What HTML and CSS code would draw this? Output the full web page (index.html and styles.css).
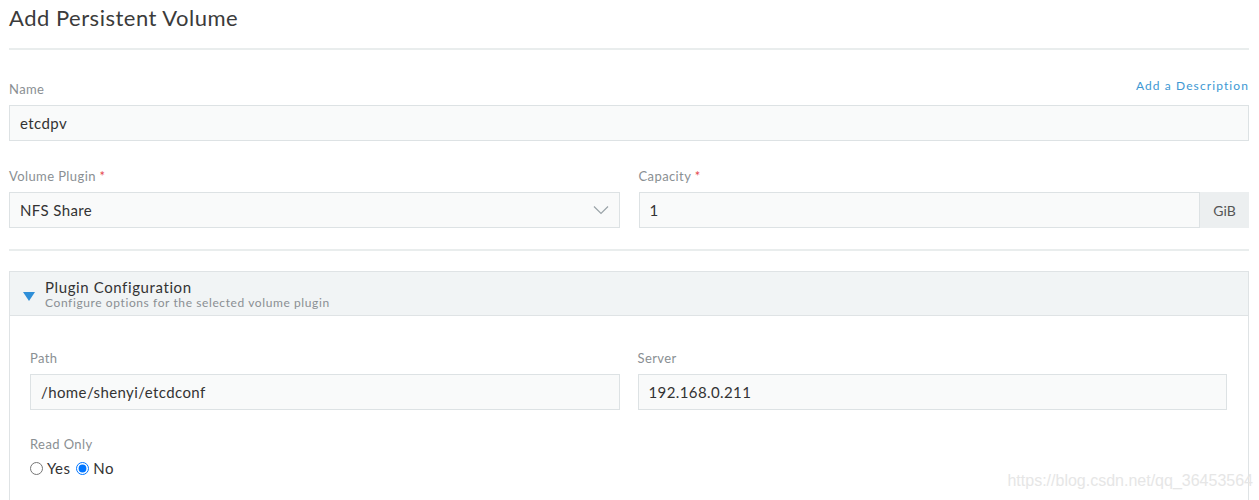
FILE: index.html
```html
<!DOCTYPE html>
<html lang="en">
<head>
  <meta charset="UTF-8" />
  <title>Add Persistent Volume</title>
  <link rel="stylesheet" href="styles.css">
</head>
<body>
  <div class="page">
    <h1>Add Persistent Volume</h1>
    <hr class="sep" />

    <div class="field">
      <div class="label-row">
        <label>Name</label>
        <a href="#" class="add-desc">Add a Description</a>
      </div>
      <div class="input">etcdpv</div>
    </div>

    <div class="row">
      <div class="field">
        <label>Volume Plugin <span class="req">*</span></label>
        <div class="input select">
          NFS Share
          <svg class="chevron" width="16" height="10" viewBox="0 0 16 10"><path d="M1 1.5 L8 8.5 L15 1.5" fill="none" stroke="#9aa3a8" stroke-width="1.2"/></svg>
        </div>
      </div>
      <div class="field">
        <label>Capacity <span class="req">*</span></label>
        <div class="input-group">
          <div class="input">1</div>
          <span class="addon">GiB</span>
        </div>
      </div>
    </div>

    <hr class="sep sep-2" />

    <div class="box">
      <div class="box-head">
        <span class="caret"></span>
        <div>
          <div class="box-title">Plugin Configuration</div>
          <div class="box-sub">Configure options for the selected volume plugin</div>
        </div>
      </div>
      <div class="box-body">
        <div class="row">
          <div class="field">
            <label>Path</label>
            <div class="input">/home/shenyi/etcdconf</div>
          </div>
          <div class="field">
            <label>Server</label>
            <div class="input">192.168.0.211</div>
          </div>
        </div>
        <div class="field radio-field">
          <label>Read Only</label>
          <div class="radios">
            <label class="radio"><input type="radio" name="ro" /> Yes</label>
            <label class="radio"><input type="radio" name="ro" checked /> No</label>
          </div>
        </div>
      </div>
    </div>
  </div>
  <div class="watermark">https://blog.csdn.net/qq_36453564</div>
</body>
</html>
```

FILE: styles.css
```css
body {
  margin: 0;
  background: white;
  font-family: Lato, "Open Sans", sans-serif;
  color: #3d3d3d;
  overflow: hidden;
  height: 500px;
}
.page {
  padding: 0 10px 0 9px;
}
h1 {
  margin: 0;
  font-size: 22px;
  font-weight: normal;
  line-height: 36px;
  color: #3b3b3b;
  letter-spacing: 0.5px;
}
.sep {
  border: none;
  height: 2px;
  background: #e9eded;
  margin: 12px 0 28px;
}
.sep-2 {
  margin: 21px 0 20px;
}
.field {
  flex: 1;
  margin-bottom: 27px;
}
.field label {
  display: block;
  font-size: 13px;
  color: #8a8f93;
  line-height: 16px;
  margin-bottom: 8px;
  letter-spacing: 0.4px;
}
.label-row {
  display: flex;
  justify-content: space-between;
  align-items: flex-end;
}
.add-desc {
  font-size: 12px;
  color: #3d98d3;
  text-decoration: none;
  letter-spacing: 1.1px;
  margin-bottom: 12px;
}
.req {
  color: #e5474b;
}
.input {
  height: 36px;
  box-sizing: border-box;
  background: #f9fafa;
  border: 1px solid #dde2e4;
  padding: 0 10px;
  display: flex;
  align-items: center;
  font-size: 15px;
  color: #333;
  letter-spacing: 0.4px;
}
.select {
  justify-content: space-between;
  padding-right: 10px;
}
.row {
  display: flex;
  gap: 19px;
}
.row .field {
  margin-bottom: 0;
}
.input-group {
  display: flex;
}
.input-group .input {
  flex: 1;
}
.addon {
  width: 49px;
  background: #eceff0;
  display: flex;
  align-items: center;
  justify-content: center;
  font-size: 14px;
  color: #555;
}
.box {
  border: 1px solid #dfe3e5;
  border-bottom: none;
}
.box-head {
  background: #f1f4f5;
  border-bottom: 1px solid #dfe3e5;
  height: 44px;
  box-sizing: border-box;
  display: flex;
  align-items: center;
  padding-left: 13px;
  gap: 10px;
}
.caret {
  width: 0;
  height: 0;
  border-left: 6px solid transparent;
  border-right: 6px solid transparent;
  border-top: 9px solid #2f8fd8;
  margin-top: 6px;
}
.box-title {
  font-size: 15px;
  color: #333;
  line-height: 18px;
  letter-spacing: 0.6px;
}
.box-sub {
  font-size: 12px;
  color: #8a8f93;
  line-height: 14px;
  letter-spacing: 0.6px;
}
.box-body {
  padding: 34px 21px 26px 20px;
}
.box-body .row {
  gap: 18px;
}
.radio-field {
  margin-top: 26px;
  margin-bottom: 0;
}
.radios {
  display: flex;
  gap: 6px;
}
.radios .radio {
  display: flex;
  align-items: center;
  gap: 4px;
  font-size: 15px;
  color: #333;
  margin: 0;
}
.radio input {
  margin: 0;
  width: 13px;
  height: 13px;
}
.watermark {
  position: absolute;
  right: 6px;
  top: 472px;
  font-family: "Liberation Sans", Arial, sans-serif;
  font-size: 16px;
  color: #e6e6e6;
}
```
